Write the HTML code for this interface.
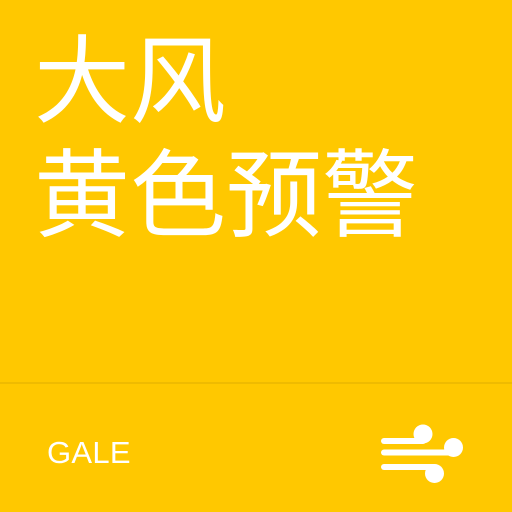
<!DOCTYPE html>
<html><head><meta charset="utf-8"><style>
html,body{margin:0;padding:0}
body{width:512px;height:512px;background:#FFC800;position:relative;overflow:hidden;font-family:"Liberation Sans","Noto Sans CJK SC",sans-serif;color:#fff}
.t{position:absolute;left:34px;font-size:96px;line-height:96px;white-space:nowrap}
.hr{position:absolute;left:0;top:382px;width:512px;height:2px;background:#EFBB00}
.g{position:absolute;left:47px;top:435px;font-size:31px;line-height:36px;letter-spacing:0.3px}
</style></head><body>
<div class="t" style="top:35px">大风</div>
<div class="t" style="top:149px">黄色预警</div>
<div class="hr"></div>
<div class="g">GALE</div>
<svg style="position:absolute;left:0;top:0" width="512" height="512">
<g fill="#fff">
<circle cx="423" cy="434" r="9.5"/>
<circle cx="453.5" cy="447.5" r="9.5"/>
<circle cx="434.5" cy="473.5" r="9.5"/>
</g>
<g stroke="#fff" stroke-width="6" stroke-linecap="round">
<line x1="384" y1="441" x2="423" y2="441"/>
<line x1="384" y1="452.5" x2="453" y2="452.5"/>
<line x1="384" y1="467" x2="434" y2="467"/>
</g>
</svg>
</body></html>
